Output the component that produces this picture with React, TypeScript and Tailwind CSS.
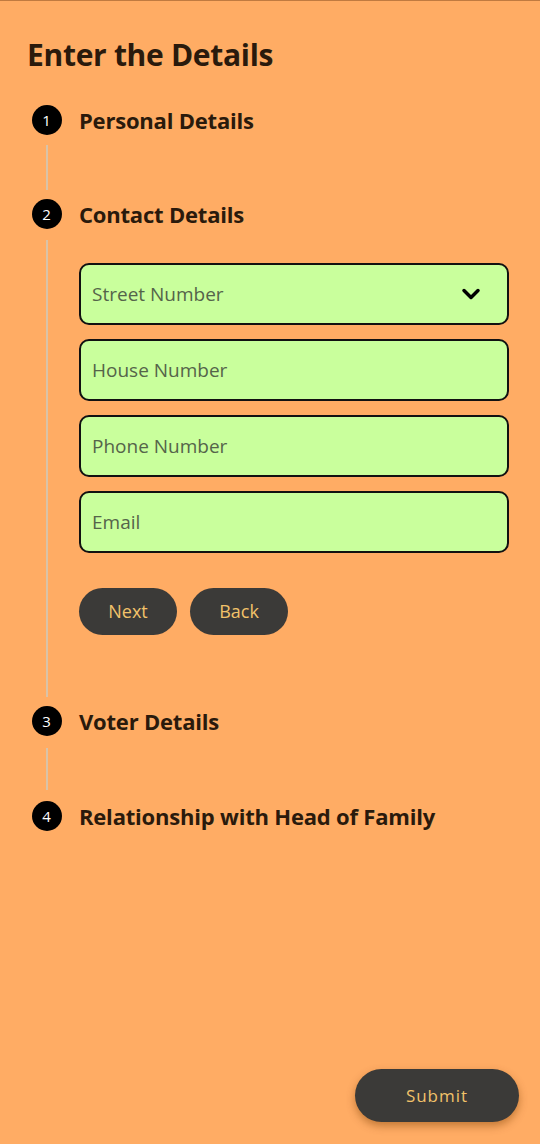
import { ChevronDown } from 'lucide-react';

const font = { fontFamily: '"Open Sans", "Noto Sans", sans-serif' };

function StepHeader({ n, title }: { n: number; title: string }) {
  return (
    <div className="flex items-center h-[32px]">
      <div className="w-[65px] flex justify-center">
        <div className="w-[30px] h-[30px] rounded-full bg-black text-white text-[15px] flex items-center justify-center shrink-0">
          {n}
        </div>
      </div>
      <h2 className="text-[22px] font-bold text-[#2a1a0c] tracking-[-0.2px]">{title}</h2>
    </div>
  );
}

function Connector({ className }: { className: string }) {
  return (
    <div className="w-[65px] flex justify-center">
      <div className={`w-[2px] bg-[#d9c3a8] ${className}`} />
    </div>
  );
}

function Field({ label, dropdown }: { label: string; dropdown?: boolean }) {
  return (
    <div className="h-[62px] w-[430px] rounded-[10px] border-2 border-[#111] bg-[#c9ff9c] flex items-center justify-between pl-[11px] pr-[22px]">
      <span className="text-[19px] text-[#55644a]">{label}</span>
      {dropdown && <ChevronDown className="w-7 h-7 text-black" strokeWidth={3} />}
    </div>
  );
}

export default function App() {
  return (
    <div style={font} className="w-[540px] h-[1144px] bg-[#ffac64] border-t border-[#c07a40] relative overflow-hidden">
      <h1 className="pl-[27px] pt-[34px] text-[30px] font-bold text-[#2a1a0c] tracking-[-0.3px] leading-[40px]">
        Enter the Details
      </h1>

      <div className="mt-[29px] pl-[14px]">
        <StepHeader n={1} title="Personal Details" />
        <div className="flex">
          <Connector className="h-[45px] mt-[9px] mb-[8px]" />
        </div>
        <StepHeader n={2} title="Contact Details" />

        <div className="flex">
          <Connector className="mt-[10px] mb-[8px]" />
          <div className="pt-[33px] pb-[70px] flex flex-col gap-[14px]">
            <Field label="Street Number" dropdown />
            <Field label="House Number" />
            <Field label="Phone Number" />
            <Field label="Email" />
            <div className="flex gap-[13px] mt-[21px]">
              <button className="w-[98px] h-[47px] rounded-full bg-[#3b3a38] text-[#f2c26a] text-[18px]">
                Next
              </button>
              <button className="w-[98px] h-[47px] rounded-full bg-[#3b3a38] text-[#f2c26a] text-[18px]">
                Back
              </button>
            </div>
          </div>
        </div>

        <StepHeader n={3} title="Voter Details" />
        <div className="flex">
          <Connector className="h-[42px] mt-[11px] mb-[10px]" />
        </div>
        <StepHeader n={4} title="Relationship with Head of Family" />
      </div>

      <button className="absolute left-[355px] top-[1068px] w-[164px] h-[53px] rounded-full bg-[#3b3a38] text-[#f2c26a] text-[17px] tracking-[1px] shadow-[0_4px_8px_rgba(120,60,0,0.45)]">
        Submit
      </button>
    </div>
  );
}
